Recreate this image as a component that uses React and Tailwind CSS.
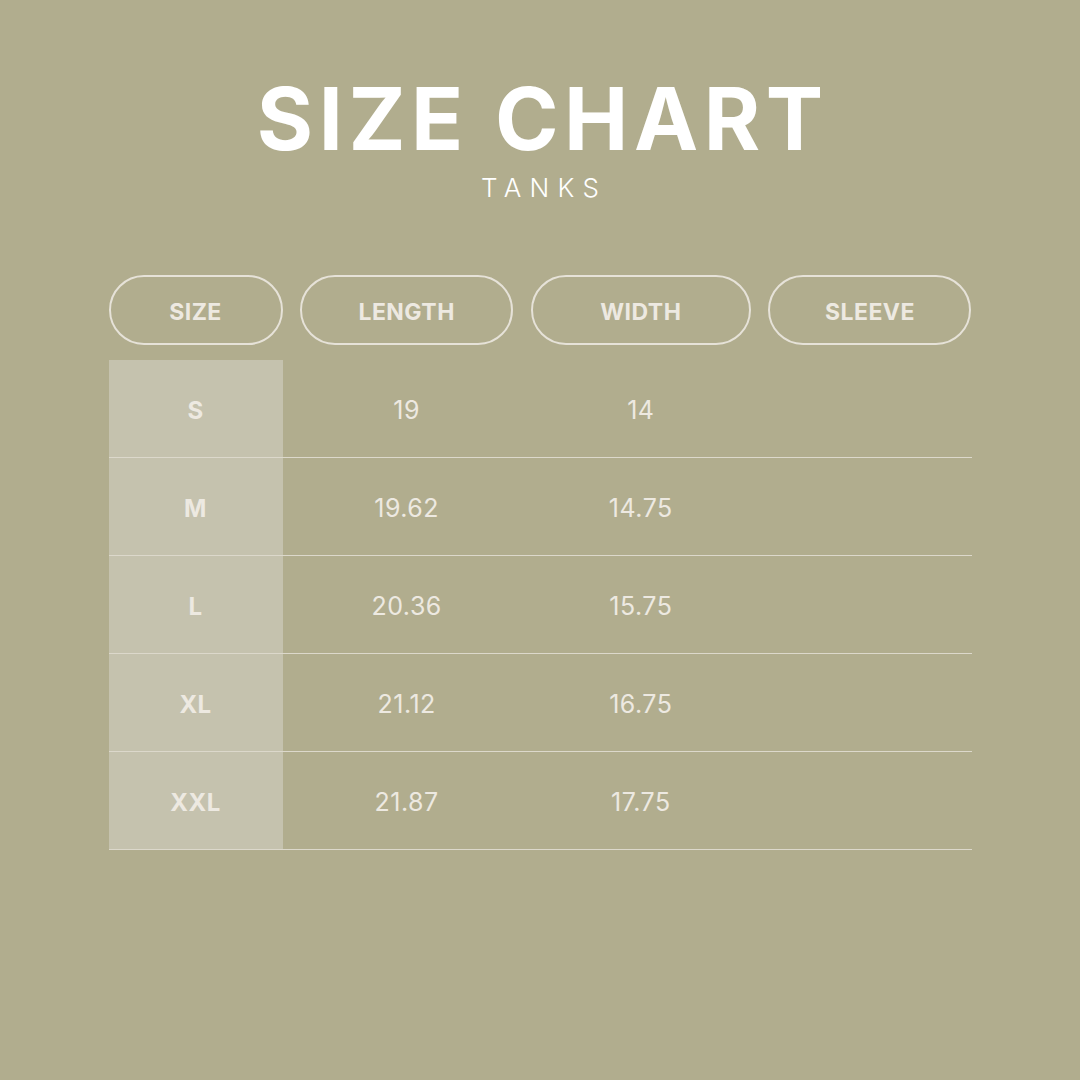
import React from 'react';

const columns = ['SIZE', 'LENGTH', 'WIDTH', 'SLEEVE'];

const rows = [
  { size: 'S', length: '19', width: '14', sleeve: '' },
  { size: 'M', length: '19.62', width: '14.75', sleeve: '' },
  { size: 'L', length: '20.36', width: '15.75', sleeve: '' },
  { size: 'XL', length: '21.12', width: '16.75', sleeve: '' },
  { size: 'XXL', length: '21.87', width: '17.75', sleeve: '' },
];

const grid = 'grid grid-cols-[174px_213px_220px_203px] gap-x-[17.67px]';

export default function App() {
  return (
    <div
      className="w-[1080px] h-[1080px] bg-[#b1ad8e] flex flex-col items-center text-[#ede9e1]"
      style={{ fontFamily: 'Inter, "Noto Sans", sans-serif' }}
    >
      {/* Title */}
      <h1 className="mt-[76px] text-[86px] leading-none font-bold text-white tracking-[0.065em] pl-[0.065em]">
        SIZE CHART
      </h1>
      <div className="mt-[13px] text-[26px] leading-none font-light text-white tracking-[0.32em] pl-[0.32em]">
        TANKS
      </div>

      {/* Table */}
      <div className="mt-[74px] w-[863px]">
        {/* Header pills */}
        <div className={grid}>
          {columns.map((c) => (
            <div
              key={c}
              className="h-[70px] pt-[4px] rounded-full border-2 border-[#e6e2d8] flex items-center justify-center text-[23px] font-bold tracking-[0.02em]"
            >
              {c}
            </div>
          ))}
        </div>

        {/* Rows */}
        <div className="mt-[15px]">
          {rows.map((r) => (
            <div key={r.size} className={`${grid} h-[98px] border-b border-[#dcd8cb]`}>
              <div className="bg-[#c5c2ae] pt-[4px] flex items-center justify-center text-[24px] font-bold tracking-[0.02em]">
                {r.size}
              </div>
              <div className="pt-[5px] flex items-center justify-center text-[25px] tracking-[0.02em]">{r.length}</div>
              <div className="pt-[5px] flex items-center justify-center text-[25px] tracking-[0.02em]">{r.width}</div>
              <div className="pt-[5px] flex items-center justify-center text-[25px] tracking-[0.02em]">{r.sleeve}</div>
            </div>
          ))}
        </div>
      </div>
    </div>
  );
}
